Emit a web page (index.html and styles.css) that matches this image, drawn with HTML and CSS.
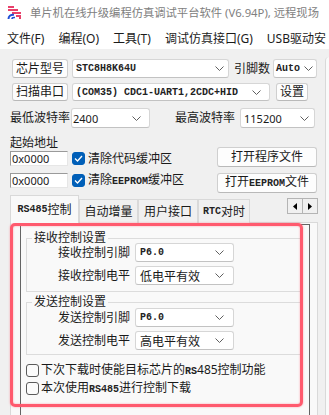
FILE: index.html
```html
<!DOCTYPE html>
<html lang="zh-CN">
<head>
    <meta charset="UTF-8">
    <meta name="viewport" content="width=device-width, initial-scale=1.0">
    <title>STC-ISP</title>
    <link rel="stylesheet" href="styles.css">
</head>
<body>
<div class="window">
    <div class="titlebar">
        <svg class="app-icon" width="15" height="13" viewBox="0 0 15 13">
            <g fill="#e8406a">
                <rect x="1" y="0" width="6" height="2"/>
                <rect x="1" y="3" width="10" height="2"/>
                <rect x="5" y="6" width="9" height="2"/>
                <rect x="9" y="9" width="5" height="2"/>
                <rect x="12" y="11" width="2" height="2"/>
            </g>
            <path d="M1.5 13 Q1.5 8.5 7 8.8" stroke="#1f4fd6" stroke-width="2" fill="none"/>
            <path d="M5 13 Q5 11.3 8 11.5" stroke="#1f4fd6" stroke-width="1.6" fill="none"/>
        </svg>
        <span class="title">单片机在线升级编程仿真调试平台软件 (V6.94P), 远程现场</span>
    </div>
    <div class="menubar">
        <span class="menu-item">文件(F)</span>
        <span class="menu-item">编程(O)</span>
        <span class="menu-item">工具(T)</span>
        <span class="menu-item">调试仿真接口(G)</span>
        <span class="menu-item">USB驱动安</span>
    </div>

    <div class="client">
        <div class="left-pane">
            <!-- chip / port / baud -->
            <div class="row row-chip">
                <button class="btn btn-wide">芯片型号</button>
                <div class="combo combo-chip"><span class="mono">STC8H8K64U</span><svg class="chev" width="9" height="5" viewBox="0 0 9 5"><polyline points="0.5,0.5 4.5,4.5 8.5,0.5"/></svg></div>
                <span class="label label-pins">引脚数</span>
                <div class="combo combo-pins"><span class="mono">Auto</span><svg class="chev" width="9" height="5" viewBox="0 0 9 5"><polyline points="0.5,0.5 4.5,4.5 8.5,0.5"/></svg></div>
            </div>
            <div class="row row-port">
                <button class="btn btn-wide">扫描串口</button>
                <div class="combo combo-port"><span class="mono">(COM35) CDC1-UART1,2CDC+HID</span><svg class="chev" width="9" height="5" viewBox="0 0 9 5"><polyline points="0.5,0.5 4.5,4.5 8.5,0.5"/></svg></div>
                <button class="btn btn-setup">设置</button>
            </div>
            <div class="row row-baud">
                <span class="label">最低波特率</span>
                <div class="combo combo-baud-min"><span class="num">2400</span><svg class="chev" width="9" height="5" viewBox="0 0 9 5"><polyline points="0.5,0.5 4.5,4.5 8.5,0.5"/></svg></div>
                <span class="label label-baud-max">最高波特率</span>
                <div class="combo combo-baud-max"><span class="num">115200</span><svg class="chev" width="9" height="5" viewBox="0 0 9 5"><polyline points="0.5,0.5 4.5,4.5 8.5,0.5"/></svg></div>
            </div>

            <!-- start address / buffers / files -->
            <div class="file-section">
                <div class="addr-col">
                    <div class="label addr-title">起始地址</div>
                    <div class="addr-row">
                        <div class="text-input">0x0000</div>
                        <span class="check checked"><svg width="9" height="7" viewBox="0 0 9 7"><polyline points="1,3.5 3.5,6 8,1"/></svg></span>
                        <span class="check-text">清除代码缓冲区</span>
                    </div>
                    <div class="addr-row addr-row-ee">
                        <div class="text-input">0x0000</div>
                        <span class="check checked"><svg width="9" height="7" viewBox="0 0 9 7"><polyline points="1,3.5 3.5,6 8,1"/></svg></span>
                        <span class="check-text">清除<span class="mono">EEPROM</span>缓冲区</span>
                    </div>
                </div>
                <div class="file-col">
                    <button class="btn btn-file">打开程序文件</button>
                    <button class="btn btn-file btn-file-ee">打开<span class="mono">EEPROM</span>文件</button>
                </div>
            </div>

            <!-- tab control -->
            <div class="tabs">
                <div class="tabstrip">
                    <span class="tab active tab-rs485"><span class="mono">RS485</span>控制</span>
                    <span class="tab tab-inc">自动增量</span>
                    <span class="tab tab-user">用户接口</span>
                    <span class="tab tab-rtc"><span class="mono">RTC</span>对时</span>
                    <span class="tab-arrows">
                        <span class="arrow-btn"><svg width="4" height="7" viewBox="0 0 4 7"><polygon points="4,0 0,3.5 4,7"/></svg></span>
                        <span class="arrow-btn"><svg width="4" height="7" viewBox="0 0 4 7"><polygon points="0,0 4,3.5 0,7"/></svg></span>
                    </span>
                </div>
                <div class="tabpage">
                    <div class="frame">
                        <fieldset class="group">
                            <legend>接收控制设置</legend>
                            <div class="field-rows">
                                <div class="field-row">
                                    <span class="field-label">接收控制引脚</span>
                                    <div class="combo combo-field"><span class="mono">P6.0</span><svg class="chev" width="9" height="5" viewBox="0 0 9 5"><polyline points="0.5,0.5 4.5,4.5 8.5,0.5"/></svg></div>
                                </div>
                                <div class="field-row">
                                    <span class="field-label">接收控制电平</span>
                                    <div class="combo combo-field"><span>低电平有效</span><svg class="chev" width="9" height="5" viewBox="0 0 9 5"><polyline points="0.5,0.5 4.5,4.5 8.5,0.5"/></svg></div>
                                </div>
                            </div>
                        </fieldset>
                        <fieldset class="group group-send">
                            <legend>发送控制设置</legend>
                            <div class="field-rows">
                                <div class="field-row">
                                    <span class="field-label">发送控制引脚</span>
                                    <div class="combo combo-field"><span class="mono">P6.0</span><svg class="chev" width="9" height="5" viewBox="0 0 9 5"><polyline points="0.5,0.5 4.5,4.5 8.5,0.5"/></svg></div>
                                </div>
                                <div class="field-row">
                                    <span class="field-label">发送控制电平</span>
                                    <div class="combo combo-field"><span>高电平有效</span><svg class="chev" width="9" height="5" viewBox="0 0 9 5"><polyline points="0.5,0.5 4.5,4.5 8.5,0.5"/></svg></div>
                                </div>
                            </div>
                        </fieldset>
                        <div class="opt-row opt-first">
                            <span class="check"></span>
                            <span class="check-text">下次下载时使能目标芯片的<span class="mono">RS</span>485控制功能</span>
                        </div>
                        <div class="opt-row">
                            <span class="check"></span>
                            <span class="check-text">本次使用<span class="mono">RS485</span>进行控制下载</span>
                        </div>
                    </div>
                </div>
            </div>
        </div>
        <div class="side-pane"></div>
    </div>

    <!-- annotation drawn over the RS485 settings -->
    <div class="highlight"></div>
</div>
</body>
</html>
```

FILE: styles.css
```css
body {
    margin: 0;
    padding: 0;
    font-family: "Noto Sans", "Noto Sans CJK SC", sans-serif;
    font-size: 12px;
    color: #1a1a1a;
    background-color: #f0f0f0;
}
.window {
    position: relative;
    width: 329px;
    height: 415px;
    overflow: hidden;
    background-color: #f0f0f0;
}
.mono {
    font-family: "Liberation Mono", "Noto Sans CJK SC", monospace;
    font-size: 10px;
    font-weight: bold;
    color: #222;
}
.num {
    font-family: "Noto Sans", sans-serif;
    font-size: 11px;
}

/* title + menu */
.titlebar {
    height: 25px;
    display: flex;
    align-items: center;
    background-color: #fff;
    white-space: nowrap;
    overflow: hidden;
}
.app-icon {
    margin-left: 7px;
    margin-right: 8px;
    flex-shrink: 0;
}
.title {
    font-size: 11.3px;
    color: #808080;
    line-height: 14px;
}
.menubar {
    height: 20px;
    padding-top: 4px;
    display: flex;
    background-color: #fff;
    white-space: nowrap;
    line-height: 20px;
    overflow: hidden;
}
.menu-item {
    padding: 0 7px;
    color: #1b1b1b;
}

/* client area */
.client {
    display: flex;
}
.left-pane {
    width: 325px;
    flex-shrink: 0;
    box-sizing: border-box;
    padding: 10px 0 0 10px;
}
.side-pane {
    flex: 1;
    margin-top: 8px;
    height: 400px;
    border-left: 1px solid #d9d9d9;
    border-top-left-radius: 4px;
    background-color: #fafafa;
}
.row {
    display: flex;
    align-items: center;
    white-space: nowrap;
}
.row-chip { height: 19px; }
.row-port { height: 18px; margin-top: 5px; }
.row-baud { height: 20px; margin-top: 7px; }
.label {
    line-height: 14px;
}
.label-pins { margin-left: 5px; }
.label-baud-max { margin-left: 25px; }

.btn {
    box-sizing: border-box;
    height: 100%;
    padding: 0;
    font-family: inherit;
    font-size: 12px;
    color: #1a1a1a;
    background-color: #fdfdfd;
    border: 1px solid #cfcfcf;
    border-bottom-color: #b9b9b9;
    border-radius: 3px;
    line-height: 14px;
    white-space: nowrap;
}
.btn-wide {
    width: 56px;
    margin-left: 2px;
}
.btn-setup {
    width: 32px;
    margin-left: 6px;
}

.combo {
    box-sizing: border-box;
    height: 100%;
    display: flex;
    align-items: center;
    justify-content: space-between;
    padding: 0 5px 0 3px;
    background-color: #fff;
    border: 1px solid #d6d6d6;
    border-bottom-color: #c2c2c2;
    border-radius: 3px;
    white-space: nowrap;
    overflow: hidden;
}
.chev {
    flex-shrink: 0;
}
.chev polyline {
    fill: none;
    stroke: #5f5f5f;
    stroke-width: 1;
}
.combo-chip { width: 157px; margin-left: 4px; padding-right: 4px; }
.combo-pins { width: 44px; margin-left: 3px; padding-left: 2px; padding-right: 3px; }
.combo-port { width: 198px; margin-left: 4px; padding-right: 8px; }
.combo-baud-min { width: 79px; margin-left: 1px; padding-left: 1px; padding-right: 8px; }
.combo-baud-max { width: 75px; margin-left: 5px; padding-right: 5px; }

/* address + file buttons */
.file-section {
    display: flex;
    margin-top: 8px;
}
.addr-col {
    flex: 1;
}
.addr-title {
    height: 14px;
}
.addr-row {
    display: flex;
    align-items: center;
    height: 15px;
    margin-top: 1px;
    white-space: nowrap;
}
.addr-row-ee {
    margin-top: 7px;
}
.text-input {
    box-sizing: border-box;
    width: 58px;
    height: 15px;
    padding-left: 1px;
    font-size: 11px;
    line-height: 13px;
    background-color: #fff;
    border: 1px solid;
    border-color: #9a9a9a #e6e6e6 #e6e6e6 #9a9a9a;
}
.check {
    box-sizing: border-box;
    width: 13px;
    height: 13px;
    flex-shrink: 0;
    display: flex;
    align-items: center;
    justify-content: center;
    border: 1px solid #5a5a5a;
    border-radius: 3px;
    background-color: #fbfbfb;
}
.check.checked {
    background-color: #005fb8;
    border-color: #005fb8;
}
.check svg polyline {
    fill: none;
    stroke: #fff;
    stroke-width: 1.3;
}
.addr-row .check {
    margin-left: 4px;
}
.check-text {
    margin-left: 3px;
    line-height: 15px;
}
.file-col {
    width: 100px;
    margin-right: 8px;
    display: flex;
    flex-direction: column;
}
.btn-file {
    height: 20px;
    width: 100px;
    margin-top: 11px;
}
.btn-file-ee {
    margin-top: 6px;
}

/* tab control */
.tabs {
    margin-top: 2px;
    margin-right: 7px;
}
.tabstrip {
    display: flex;
    align-items: flex-end;
    height: 28px;
    margin-bottom: -1px;
    white-space: nowrap;
}
.tab {
    box-sizing: border-box;
    height: 24px;
    display: flex;
    align-items: center;
    justify-content: center;
    background-color: #f0f0f0;
    border: 1px solid #d9d9d9;
    border-bottom: none;
    line-height: 14px;
}
.tab.active {
    height: 28px;
    background-color: #f9f9f9;
    position: relative;
    z-index: 1;
}
.tab-rs485 { width: 69px; }
.tab-inc { width: 59px; }
.tab-user { width: 60px; }
.tab-rtc { width: 52px; }
.tab-arrows {
    display: flex;
    align-self: flex-start;
    margin-top: 3px;
    margin-left: auto;
}
.arrow-btn {
    box-sizing: border-box;
    width: 16px;
    height: 16px;
    display: flex;
    align-items: center;
    justify-content: center;
    background-color: #f0f0f0;
    border: 1px solid #b4b4b4;
}
.arrow-btn + .arrow-btn {
    margin-left: -1px;
}
.tabpage {
    height: 200px;
    background-color: #f9f9f9;
    border: 1px solid #d9d9d9;
}
.frame {
    height: 200px;
    margin: 1px 7px 0 9px;
    padding: 7px 6px 0 5px;
    border: 1px solid #646464;
    border-bottom: none;
    background-color: #f9f9f9;
}
.group {
    margin: 0;
    padding: 0 0 6px 0;
    border: 1px solid #dcdcdc;
    min-width: 0;
}
.group legend {
    margin-left: 5px;
    padding: 0 2px;
    line-height: 12px;
}
.group-send {
    margin-top: 4px;
    padding-bottom: 4px;
}
.field-rows {
    display: flex;
    flex-direction: column;
    gap: 4px;
    margin-top: -1px;
}
.group-send .field-rows {
    margin-top: 0;
}
.field-row {
    display: flex;
    align-items: center;
    height: 19px;
}
.field-label {
    width: 103px;
    text-align: right;
    margin-right: 5px;
    line-height: 14px;
}
.combo-field {
    width: 99px;
    padding-left: 4px;
    padding-right: 9px;
}
.opt-row {
    display: flex;
    align-items: center;
    height: 15px;
    margin-top: 3px;
    white-space: nowrap;
}
.opt-first {
    margin-top: 8px;
}
.opt-row .check-text {
    margin-left: 2px;
}

/* red annotation */
.highlight {
    position: absolute;
    left: 10px;
    top: 223px;
    width: 293px;
    height: 184px;
    box-sizing: border-box;
    border: 3px solid #ff5a6e;
    border-radius: 5px;
    box-shadow: 0 0 2px rgba(255, 90, 110, 0.6), inset 0 0 2px rgba(255, 90, 110, 0.6);
}
```
